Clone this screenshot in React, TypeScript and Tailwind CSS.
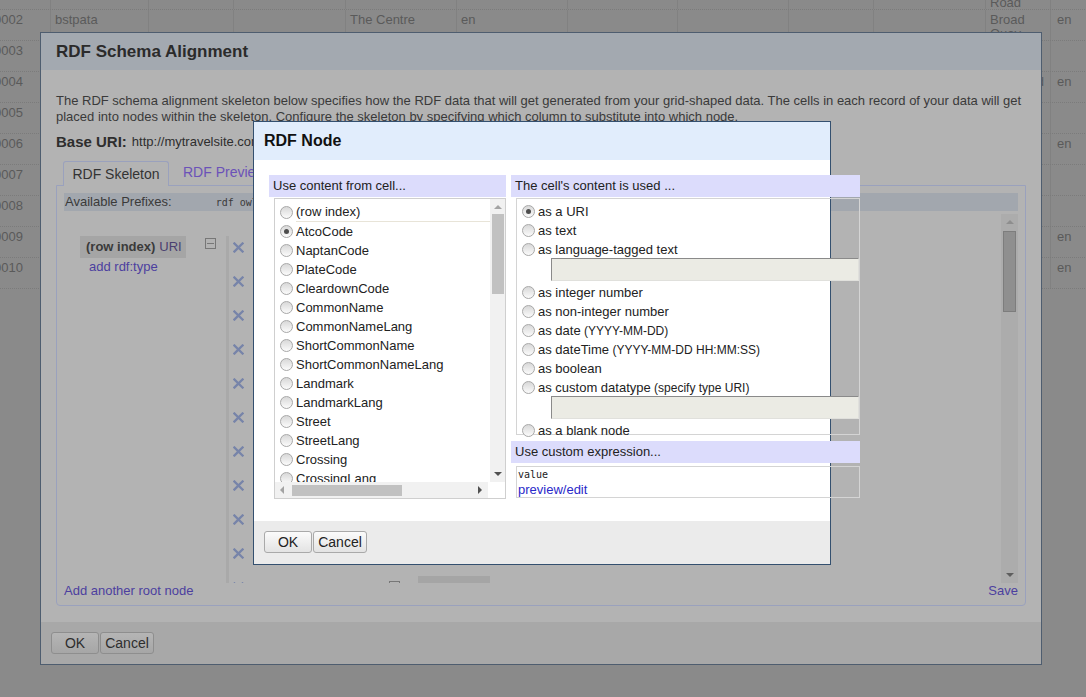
import React from "react";

// widths of the data grid columns behind the dialogs
const colW = [51, 98, 85, 112, 111, 111, 110, 111, 85, 112, 65, 60];

const rows: { id: string; cells: Record<number, string> }[] = [
  { id: "0001", cells: { 10: "Hill\nRoad" } },
  { id: "0002", cells: { 1: "bstpata", 4: "The Centre", 5: "en", 10: "Broad Quay", 11: "en" } },
  { id: "0003", cells: {} },
  { id: "0004", cells: { 10: "Westland", 11: "en" } },
  { id: "0005", cells: {} },
  { id: "0006", cells: { 11: "en" } },
  { id: "0007", cells: {} },
  { id: "0008", cells: {} },
  { id: "0009", cells: { 11: "en" } },
  { id: "0010", cells: { 11: "en" } },
];

const cellColumns = [
  "(row index)",
  "AtcoCode",
  "NaptanCode",
  "PlateCode",
  "CleardownCode",
  "CommonName",
  "CommonNameLang",
  "ShortCommonName",
  "ShortCommonNameLang",
  "Landmark",
  "LandmarkLang",
  "Street",
  "StreetLang",
  "Crossing",
  "CrossingLang",
  "Indicator",
];

function Radio({ checked }: { checked?: boolean }) {
  return (
    <span className="w-[13px] h-[13px] rounded-full border border-[#a8a8a8] bg-linear-to-b from-[#d8d8d8] to-[#fbfbfb] shrink-0 flex items-center justify-center">
      {checked && <span className="w-[5px] h-[5px] rounded-full bg-[#4d4d4d]" />}
    </span>
  );
}

function Cross() {
  return (
    <svg width="11" height="11" viewBox="0 0 11 11" className="shrink-0">
      <path d="M1.5 1.5 L9.5 9.5 M9.5 1.5 L1.5 9.5" stroke="#7784a9" strokeWidth="2.3" strokeLinecap="square" />
    </svg>
  );
}

function Btn({ label, w, dim }: { label: string; w: string; dim?: boolean }) {
  return (
    <button
      className={`${w} h-[22px] rounded-[3px] border text-[14px] leading-none flex items-center justify-center ${
        dim
          ? "border-[#8e8e8e] bg-linear-to-b from-[#b5b5b5] to-[#a6a6a6] text-[#2e2e2e]"
          : "border-[#a9a9a9] bg-linear-to-b from-[#fbfbfb] to-[#e3e3e3] text-[#222]"
      }`}
    >
      {label}
    </button>
  );
}

function DataGrid() {
  return (
    <div className="-mt-[21px] -ml-[7px] w-max">
      {rows.map((r) => (
        <div key={r.id} className="flex h-[31px] border-b border-dotted border-[#7b7b7b]">
          {colW.map((w, i) => (
            <div
              key={i}
              style={{ width: i === 0 ? w + 7 : w }}
              className={`h-full shrink-0 overflow-hidden whitespace-pre-line border-r border-[#818181] text-[13px] leading-[14px] text-[#5a5a5a] pt-[3px] ${
                i === 0 ? "pl-[1px]" : i === 11 ? "pl-[6px]" : "pl-[4px] pr-[4px]"
              }`}
            >
              {i === 0 ? r.id : r.cells[i] ?? ""}
            </div>
          ))}
        </div>
      ))}
    </div>
  );
}

function OuterDialog() {
  return (
    <div className="absolute left-[40px] top-[32px] w-[1002px] h-[633px] border border-[#4e5d6f] bg-[#b3b3b3] flex flex-col">
      <div className="h-[37px] shrink-0 bg-[#a3a9b0] px-[15px] flex items-center">
        <span className="text-[17px] font-bold text-[#2b2b2b]">RDF Schema Alignment</span>
      </div>
      <div className="px-[15px] pt-[23px] flex flex-col">
        <p className="text-[13px] leading-[16px] text-[#3a3a3a]">
          The RDF schema alignment skeleton below specifies how the RDF data that will get generated from your grid-shaped data. The cells in each record of your data will get placed into nodes within the skeleton. Configure the skeleton by specifying which column to substitute into which node.
        </p>
        <div className="mt-[8px] h-[18px] flex items-center gap-[5px] text-[#2e2e2e]">
          <span className="text-[15px] font-bold">Base URI:</span>
          <span className="text-[13px]">http://mytravelsite.com/</span>
        </div>
        <div className="mt-[9px] flex h-[25px] pl-[7px] items-end">
          <div className="h-[25px] w-[106px] border border-b-0 border-[#9aa1bd] rounded-t-[3px] bg-[#b3b3b3] text-[14px] text-[#333] flex items-center justify-center relative top-[1px]">
            RDF Skeleton
          </div>
          <div className="h-[25px] pl-[14px] text-[14px] text-[#6b52b8] flex items-center">RDF Preview</div>
        </div>
        <div className="h-[421px] border border-[#9aa1bd] rounded-b-[4px] px-[7px] pt-[7px] flex flex-col">
          <div className="h-[18px] shrink-0 bg-[#a2a7ae] flex items-center pl-[1px] text-[13px] text-[#3a3a3a]">
            <span>Available Prefixes:</span>
            <span className="ml-[44px] font-['DejaVu_Sans_Mono',monospace] text-[10px] text-[#3a3a3a]">rdf owl rdfs foaf xsd dcterms</span>
          </div>
          <div className="mt-[3px] h-[369px] shrink-0 flex overflow-hidden">
            <div className="flex-1 flex overflow-hidden">
              <div className="w-[141px] shrink-0 pl-[16px] pt-[22px]">
                <div className="w-[106px] h-[22px] bg-[#a5a5a5] flex items-center pl-[6px] text-[13px] text-[#3a3a3a]">
                  <span className="font-bold">(row index)</span>
                  <span className="ml-[4px] text-[#4a3f70]">URI</span>
                </div>
                <div className="mt-[1px] pl-[9px] text-[13px] leading-[16px] text-[#4c3f9f]">add rdf:type</div>
              </div>
              <div className="w-[21px] shrink-0 pt-[24px]">
                <div className="w-[11px] h-[11px] border border-[#777] flex items-center justify-center">
                  <div className="w-[7px] h-px bg-[#777]" />
                </div>
              </div>
              <div className="w-[3px] shrink-0 mt-[22px] bg-[#a9a9a9]" />
              <div className="pt-[22px] flex flex-col">
                {Array.from({ length: 11 }).map((_, i) => (
                  <div key={i} className="h-[34px] shrink-0 flex items-start pl-[4px]">
                    <div className="mt-[6px]">
                      <Cross />
                    </div>
                    <span className="ml-[60px] mt-[5px] text-[13px] text-[#3a3a3a]">naptan:Sub</span>
                    <div className="ml-[18px] mt-[5px] w-[11px] h-[11px] border border-[#777]" />
                    <div className="ml-[18px] w-[72px] h-[22px] bg-[#a5a5a5] text-[13px] text-[#3a3a3a] pl-[4px] pt-[4px]">Street cell</div>
                  </div>
                ))}
              </div>
            </div>
            <div className="w-[17px] shrink-0 bg-[#acacac] flex flex-col items-center">
              <div className="mt-[6px] w-0 h-0 border-l-[4px] border-r-[4px] border-b-[4px] border-l-transparent border-r-transparent border-b-[#8e8e8e]" />
              <div className="mt-[7px] w-[13px] h-[81px] bg-[#8f8f8f] border border-[#7d7d7d]" />
              <div className="mt-auto mb-[6px] w-0 h-0 border-l-[4px] border-r-[4px] border-t-[4px] border-l-transparent border-r-transparent border-t-[#5e5e5e]" />
            </div>
          </div>
          <div className="h-[16px] shrink-0 flex justify-between text-[13px] leading-[16px] text-[#4c3f9f]">
            <span>Add another root node</span>
            <span>Save</span>
          </div>
        </div>
      </div>
      <div className="mt-auto h-[42px] bg-[#a8a8a8] px-[10px] pt-[10px] flex gap-[1px]">
        <Btn label="OK" w="w-[48px]" dim />
        <Btn label="Cancel" w="w-[54px]" dim />
      </div>
    </div>
  );
}

function InnerDialog() {
  const opt = (main: string, small?: string, checked?: boolean) => (
    <div className="h-[19px] flex items-center gap-[3px] pl-[5px] text-[13px] text-[#222]">
      <Radio checked={checked} />
      <span className="whitespace-nowrap">
        {main}
        {small && <span className="text-[12px]"> {small}</span>}
      </span>
    </div>
  );
  const field = () => (
    <div className="ml-[34px] -mt-[1px] mb-[2px] h-[23px] bg-[#ebebe4] border-t border-l border-[#8a8a8a] border-r border-b border-r-[#e0e0dc] border-b-[#e0e0dc]" />
  );
  return (
    <div className="absolute left-[253px] top-[121px] w-[578px] h-[444px] border border-[#34506f] bg-white flex flex-col">
      <div className="h-[38px] shrink-0 bg-[#e1edfc] px-[10px] flex items-center">
        <span className="text-[16px] font-bold text-[#111]">RDF Node</span>
      </div>
      <div className="flex-1 px-[15px] pt-[15px] flex gap-[5px]">
        <div className="w-[237px] shrink-0 flex flex-col">
          <div className="h-[22px] bg-[#dcdcfc] pl-[4px] flex items-center text-[13px] text-[#222]">Use content from cell...</div>
          <div className="ml-[5px] mt-[1px] h-[301px] border border-[#cfcfcf] flex flex-col">
            <div className="flex flex-1 overflow-hidden">
              <div className="flex-1 overflow-hidden pt-[3px]">
                {cellColumns.map((c, i) => (
                  <div
                    key={c}
                    className={`${i === 0 ? "h-[20px]" : "h-[19px]"} flex items-center pl-[5px] text-[13px] text-[#222] whitespace-nowrap`}
                  >
                    <Radio checked={i === 1} />
                    <span className={`ml-[3px] flex-1 ${i === 0 ? "border-b border-[#e8e4d8] h-[20px] leading-[19px]" : ""}`}>{c}</span>
                  </div>
                ))}
              </div>
              <div className="w-[15px] shrink-0 bg-[#f1f1f1] flex flex-col items-center">
                <div className="mt-[6px] w-0 h-0 border-l-[4px] border-r-[4px] border-b-[4px] border-l-transparent border-r-transparent border-b-[#a3a3a3]" />
                <div className="mt-[5px] w-[12px] h-[80px] bg-[#c1c1c1]" />
                <div className="mt-auto mb-[6px] w-0 h-0 border-l-[4px] border-r-[4px] border-t-[4px] border-l-transparent border-r-transparent border-t-[#505050]" />
              </div>
            </div>
            <div className="h-[16px] shrink-0 flex">
              <div className="w-[213px] bg-[#f1f1f1] flex items-center">
                <div className="ml-[5px] w-0 h-0 border-t-[4px] border-b-[4px] border-r-[4px] border-t-transparent border-b-transparent border-r-[#a3a3a3]" />
                <div className="ml-[8px] w-[110px] h-[11px] bg-[#c1c1c1]" />
                <div className="ml-auto mr-[6px] w-0 h-0 border-t-[4px] border-b-[4px] border-l-[4px] border-t-transparent border-b-transparent border-l-[#505050]" />
              </div>
              <div className="flex-1 bg-white" />
            </div>
          </div>
        </div>
        <div className="w-[349px] shrink-0 flex flex-col">
          <div className="h-[22px] bg-[#dcdcfc] pl-[4px] flex items-center text-[13px] text-[#222]">The cell's content is used ...</div>
          <div className="ml-[5px] mt-[1px] h-[237px] border border-[#d4d4d4] pt-[3px]">
            {opt("as a URI", undefined, true)}
            {opt("as text")}
            {opt("as language-tagged text")}
            {field()}
            {opt("as integer number")}
            {opt("as non-integer number")}
            {opt("as date", "(YYYY-MM-DD)")}
            {opt("as dateTime", "(YYYY-MM-DD HH:MM:SS)")}
            {opt("as boolean")}
            {opt("as custom datatype", "(specify type URI)")}
            {field()}
            {opt("as a blank node")}
          </div>
          <div className="mt-[6px] h-[22px] bg-[#dcdcfc] pl-[4px] flex items-center text-[13px] text-[#222]">Use custom expression...</div>
          <div className="ml-[5px] mt-[3px] h-[32px] border border-[#d4d4d4] pl-[1px]">
            <div className="font-['DejaVu_Sans_Mono',monospace] text-[10px] leading-[13px] text-[#222] pt-px">value</div>
            <div className="text-[13px] leading-[16px] text-[#2a2ac9] pt-px">preview/edit</div>
          </div>
        </div>
      </div>
      <div className="h-[43px] shrink-0 bg-[#ebebeb] px-[10px] pt-[10px] flex gap-[1px]">
        <Btn label="OK" w="w-[48px]" />
        <Btn label="Cancel" w="w-[54px]" />
      </div>
    </div>
  );
}

export default function App() {
  return (
    <div className="relative w-[1086px] h-[697px] overflow-hidden bg-[#8a8a8a] font-['Liberation_Sans',Arial,sans-serif]">
      <DataGrid />
      <OuterDialog />
      <InnerDialog />
    </div>
  );
}
